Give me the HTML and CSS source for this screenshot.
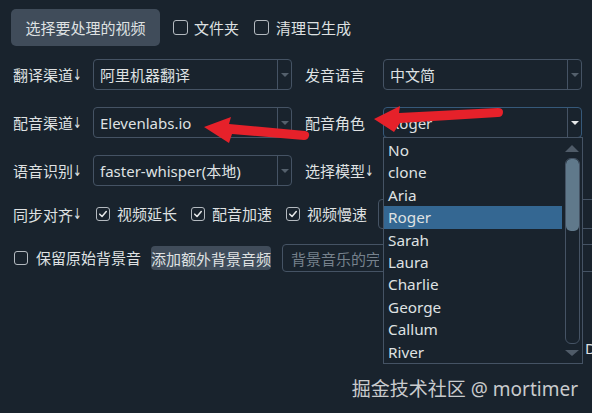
FILE: index.html
```html
<!DOCTYPE html>
<html lang="zh">
<head>
<meta charset="utf-8">
<title>视频翻译配音</title>
<link rel="stylesheet" href="styles.css">
</head>
<body>
<div class="app">
  <div class="toprow">
    <button class="btn btn-main">选择要处理的视频</button>
    <label class="check"><span class="cb"></span>文件夹</label>
    <label class="check"><span class="cb"></span>清理已生成</label>
  </div>

  <div class="form">
    <div class="lbl">翻译渠道<span class="dn">↓</span></div>
    <div class="combo"><span class="combo-text">阿里机器翻译</span><span class="combo-btn"><span class="tri"></span></span></div>
    <div class="lbl lbl2">发音语言</div>
    <div class="combo"><span class="combo-text">中文简</span><span class="combo-btn"><span class="tri"></span></span></div>

    <div class="lbl">配音渠道<span class="dn">↓</span></div>
    <div class="combo"><span class="combo-text">Elevenlabs.io</span><span class="combo-btn"><span class="tri"></span></span></div>
    <div class="lbl lbl2">配音角色</div>
    <div class="combo focus"><span class="combo-text">Roger</span><span class="combo-btn"><span class="tri"></span></span></div>

    <div class="lbl">语音识别<span class="dn">↓</span></div>
    <div class="combo"><span class="combo-text">faster-whisper(本地)</span><span class="combo-btn"><span class="tri"></span></span></div>
    <div class="lbl lbl2">选择模型<span class="dn">↓</span></div>
    <div class="combo"><span class="combo-text"></span><span class="combo-btn"><span class="tri"></span></span></div>
  </div>

  <div class="syncrow">
    <div class="lbl">同步对齐<span class="dn">↓</span></div>
    <label class="check"><span class="cb on"><svg viewBox="0 0 14 14" class="tick"><path d="M3.2 7.2 L5.9 9.9 L10.8 4.2"/></svg></span>视频延长</label>
    <label class="check"><span class="cb on"><svg viewBox="0 0 14 14" class="tick"><path d="M3.2 7.2 L5.9 9.9 L10.8 4.2"/></svg></span>配音加速</label>
    <label class="check"><span class="cb on"><svg viewBox="0 0 14 14" class="tick"><path d="M3.2 7.2 L5.9 9.9 L10.8 4.2"/></svg></span>视频慢速</label>
    <div class="combo wide"></div>
  </div>

  <div class="bgrow">
    <label class="check"><span class="cb"></span>保留原始背景音</label>
    <button class="btn btn-small">添加额外背景音频</button>
    <div class="lineedit"><span class="placeholder">背景音乐的完整路径</span></div>
  </div>

  <div class="hiddenrow">D</div>
</div>

<div class="popup">
  <ul class="list">
    <li>No</li>
    <li>clone</li>
    <li>Aria</li>
    <li class="sel">Roger</li>
    <li>Sarah</li>
    <li>Laura</li>
    <li>Charlie</li>
    <li>George</li>
    <li>Callum</li>
    <li>River</li>
  </ul>
  <div class="scroll">
    <span class="sc-up"></span>
    <div class="track"><div class="handle"></div></div>
    <span class="sc-down"></span>
  </div>
</div>

<svg class="arrows" viewBox="0 0 592 413" width="592" height="413">
  <path d="M204,127 L231,117 L229,124 L305,131 Q310,132 309,136 Q308,140 304,140 L232,134 L229,143 Z"/>
  <path d="M374,119 L400,106 L399,113 L498,108 Q503,108 503,112 Q503,117 498,117 L400,123 L394,132 Z"/>
</svg>

<div class="watermark">掘金技术社区 @ mortimer</div>
</body>
</html>
```

FILE: styles.css
```css
* { box-sizing: border-box; }

html, body {
  margin: 0;
  padding: 0;
}

body {
  width: 592px;
  height: 413px;
  overflow: hidden;
  position: relative;
  background: #19232d;
  color: #dfe1e2;
  font-family: "Noto Sans", "Noto Sans CJK SC", sans-serif;
  font-size: 15px;
}

.app {
  width: 592px;
}

.toprow {
  display: flex;
  align-items: center;
  padding: 9px 0 0 11px;
  height: 46px;
}

.btn {
  font-family: inherit;
  color: #dfe1e2;
  background: #404c5a;
  border: none;
  border-radius: 5px;
  padding: 0;
}

.btn-main {
  width: 149px;
  height: 37px;
  font-size: 15px;
  margin-right: 13px;
}

.check {
  display: flex;
  align-items: center;
  gap: 7px;
  white-space: nowrap;
  line-height: 20px;
}

.toprow .check {
  margin-right: 15px;
}

.toprow .check:first-of-type {
  gap: 6px;
}

.cb {
  width: 14px;
  height: 14px;
  border: 1.5px solid #b4bac0;
  border-radius: 3px;
  display: inline-flex;
  align-items: center;
  justify-content: center;
  flex: none;
}

.toprow .cb {
  width: 15px;
  height: 15px;
}

.tick {
  width: 12px;
  height: 12px;
  fill: none;
  stroke: #e6e8e9;
  stroke-width: 1.8;
  stroke-linecap: round;
  stroke-linejoin: round;
}

.form {
  display: grid;
  grid-template-columns: 80px 199px 91px 199px;
  grid-auto-rows: 31px;
  row-gap: 17px;
  margin-top: 13px;
  padding-left: 13px;
}

.lbl {
  display: flex;
  align-items: center;
  white-space: nowrap;
}

.lbl2 {
  padding-left: 13px;
}

.dn {
  display: inline-block;
  width: 9px;
  font-family: "DejaVu Sans", sans-serif;
  font-size: 15px;
  transform: scaleX(0.68);
  transform-origin: left center;
}

.combo {
  display: flex;
  align-items: stretch;
  border: 1px solid #455364;
  border-radius: 4px;
  overflow: hidden;
  white-space: nowrap;
}

.combo.focus {
  border-color: #36597a;
}

.combo-text {
  flex: 1;
  display: flex;
  align-items: center;
  padding-left: 6px;
  overflow: hidden;
}

.combo-btn {
  width: 14px;
  border-left: 1px solid #455364;
  display: flex;
  align-items: center;
  justify-content: center;
  flex: none;
}

.tri {
  width: 0;
  height: 0;
  border-left: 4px solid transparent;
  border-right: 4px solid transparent;
  border-top: 4px solid #54606c;
}

.combo.focus .tri {
  border-top-color: #e6e8e9;
}

.syncrow {
  display: flex;
  align-items: center;
  gap: 14px;
  height: 30px;
  margin-top: 13px;
  padding-left: 13px;
}

.combo.wide {
  width: 240px;
  height: 30px;
  margin-left: -3px;
  flex: none;
}

.bgrow {
  display: flex;
  align-items: center;
  height: 28px;
  margin-top: 15px;
  padding-left: 14px;
}

.bgrow .check {
  gap: 8px;
  margin-right: 10px;
}

.btn-small {
  width: 124px;
  height: 24px;
  font-size: 15px;
  border-radius: 4px;
  margin-right: 11px;
  white-space: nowrap;
}

.lineedit {
  flex: none;
  width: 330px;
  height: 28px;
  border: 1px solid #455364;
  border-radius: 4px;
  display: flex;
  align-items: center;
  padding-left: 8px;
  white-space: nowrap;
}

.placeholder {
  color: #76818c;
  display: block;
  width: 88px;
  overflow: hidden;
}

.hiddenrow {
  margin-top: 66px;
  padding-left: 585px;
  line-height: 20px;
  white-space: nowrap;
}

/* dropdown popup */
.popup {
  position: absolute;
  left: 383px;
  top: 137px;
  width: 200px;
  height: 227px;
  border: 1px solid #455364;
  background: #19232d;
  display: flex;
}

.list {
  list-style: none;
  margin: 0;
  padding: 1px 0 0 0;
  width: 179px;
}

.list li {
  height: 22.4px;
  line-height: 22.4px;
  padding-left: 4px;
  width: 178px;
  white-space: nowrap;
  font-size: 15.3px;
}

.list li.sel {
  background: #346792;
}

.scroll {
  width: 19px;
  display: flex;
  flex-direction: column;
  align-items: center;
  padding: 7px 2px 7px 1px;
}

.sc-up {
  width: 0;
  height: 0;
  border-left: 7px solid transparent;
  border-right: 7px solid transparent;
  border-bottom: 7px solid #4f5b68;
  flex: none;
}

.sc-down {
  width: 0;
  height: 0;
  border-left: 7px solid transparent;
  border-right: 7px solid transparent;
  border-top: 6px solid #4f5b68;
  flex: none;
}

.track {
  flex: 1;
  width: 15px;
  margin: 6px 0;
  border: 1px solid #455364;
  border-radius: 6px;
  overflow: hidden;
}

.handle {
  height: 72px;
  background: #60798b;
  border-radius: 5px;
}

.arrows {
  position: absolute;
  left: 0;
  top: 0;
  pointer-events: none;
  fill: #e6212a;
}

.watermark {
  position: absolute;
  right: 14px;
  top: 376px;
  font-size: 19px;
  line-height: 26px;
  color: #c9cbcd;
  white-space: nowrap;
}
```
